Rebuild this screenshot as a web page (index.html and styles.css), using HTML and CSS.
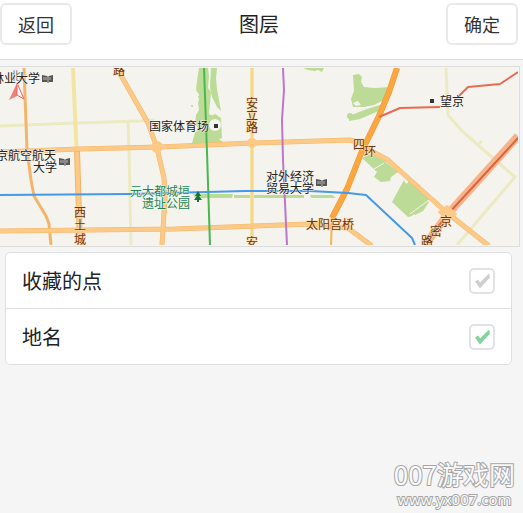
FILE: index.html
```html
<!DOCTYPE html>
<html lang="zh-CN">
<head>
    <meta charset="UTF-8">
    <meta name="viewport" content="width=device-width, initial-scale=1.0">
    <title>图层</title>
    <link rel="stylesheet" href="styles.css">
</head>
<body>
    <header class="topbar">
        <button class="btn" type="button">返回</button>
        <h1>图层</h1>
        <button class="btn" type="button">确定</button>
    </header>

    <div class="map">
        <svg viewBox="0 68 518 177" role="img" aria-label="地图">
            <defs>
                <g id="book">
                    <path d="M0 1l5 1 1 1 1-1 4-1v7l-4 0-1 1-1-1-5 0z" fill="#555"/>
                    <path d="M2 3v3M4 3v3M8 3v3M6 3v5" stroke="#bbb" fill="none"/>
                </g>
            </defs>
            <rect x="0" y="68" width="518" height="177" fill="#f5f3ee"/>

            <!-- parks -->
            <g fill="#bcdb96">
                <path d="M199 68h9l1 8-1 12 3 4-2 22 8 4-2 6-4 5 1 7 5 2 6 4v3l-29 1-2-3 3-10 4-4-4-6 1-8 3-5-1-7 2-7-4-6 1-9z"/>
                <path d="M211 68h6l-1 10 1 11 4 22-4-4-5-10-2-10z"/>
                <path d="M209 117l6-3 6 4 1 20-8 4-6-8z"/>
                <path d="M303 68h21l-2 4-4-2-3 1-7-1z"/>
                <path d="M353 75l6-1 3 3-1 5 3 5 10 1 17-1-4 13-5 1-8 4-10 2-11 0-2-8 3-8z"/>
                <path d="M349 116l18-7 16-5-2 6-21 9-11 2z"/>
                <path d="M362 158l9-4 12 6 15 12-7 5-1 4-9 1-7-5 3-5z"/>
                <path d="M404 180l2 4 5-4 8 9 11 9-18 18-4 1-16-15z"/>
                <path d="M413 214l14-14 2 2-6 9-8 4z"/>
                <path d="M193 194h40l-1 4h-37zM234 195h70v3h-70zM310 195h22l4 3h-25z"/>
            </g>
            <g fill="#f5f3ee">
                <path d="M353 103l5-2 3 4-5 1z"/>
                <circle cx="215" cy="125" r="6"/>
            </g>
            <path d="M374 169l10-6M352 111l16-4M410 214l19-14" stroke="#f5f3ee" stroke-width="1" fill="none"/>
            <g fill="#bcdb96"><circle cx="192" cy="106" r="1"/><circle cx="201" cy="87" r="2"/><circle cx="200" cy="97" r="2"/><circle cx="350" cy="116" r="3"/></g>

            <g fill="none" stroke-linejoin="round">
                <!-- small roads -->
                <g stroke="#ebeac2" stroke-width="3">
                    <path d="M0 126l75-3 65-2 14-1M128 120l1 30 2 95"/>
                    <path d="M446 68l2 47 14 16 24 21 29 25-58 68M478 145l4-4"/>
                </g>
                <g stroke="#f4e4a4" stroke-width="4">
                    <path d="M73 68l4 92M252 68v177"/>
                </g>
                <path d="M252 68v177" stroke="#f5d78e" stroke-width="2"/>

                <!-- main roads -->
                <g stroke="#f3b56a">
                    <path d="M24 68l3 82 4 30 3 16 12 20 3 8 2 21" stroke-width="3"/>
                    <path d="M77 151l3 94" stroke-width="6"/>
                    <path d="M119 72l29 51 9 25 7 30 1 20-3 47" stroke-width="5"/>
                    <path d="M0 152l80-3 80-2 92-4 98-3 17 5" stroke-width="5"/>
                    <path d="M0 231l175-2 135-5 38 4 24 18" stroke-width="5"/>
                    <path d="M362 146l26 14 58 52 43 34" stroke-width="5"/>
                </g>
                <g stroke="#fcca86" stroke-width="4">
                    <path d="M77 152l3 93M119 72l29 51 9 25 7 30 1 20-3 47"/>
                    <path d="M0 152l80-3 80-2 92-4 98-3 17 5"/>
                    <path d="M0 231l175-2 135-5 38 4 24 18M362 146l26 14 58 52 43 34"/>
                </g>
                <path d="M332 215l-1 30" stroke="#f5b54b" stroke-width="2"/>
                <path d="M397 68l-8 24-10 24-17 35-15 38-15 29" stroke="#ef9a3c" stroke-width="6"/>
                <path d="M397 68l-8 24-10 24-17 35-15 38-15 29" stroke="#fba63f" stroke-width="5"/>
                <path d="M518 136l-71 79-22 30" stroke="#f7b48c" stroke-width="8"/>
                <path d="M518 138l-70 76-22 28" stroke="#d8663e" stroke-width="2"/>
                <path d="M379 117l21-9 40-1M458 97l10-10 32-3 18-12" stroke="#e96a52" stroke-width="2"/>
                <g stroke="#fcca86" stroke-width="2" fill="#fcc987">
                    <circle cx="157" cy="147" r="5"/>
                    <circle cx="252" cy="143" r="4"/>
                    <path d="M439 212l8-6 9 8-8 7z"/>
                </g>

                <!-- metro lines -->
                <path d="M204 68l3 84 3 93" stroke="#48b84e" stroke-width="2"/>
                <path d="M283 68l1 22-2 30 1 40 4 85" stroke="#bb77cb" stroke-width="2"/>
                <path d="M0 195l130-1 115-3 65 0 38 2 18 2 46 43 3 7" stroke="#4698e8" stroke-width="2"/>
            </g>

            <!-- compass -->
            <text class="north" x="10" y="80">北</text>
            <path d="M17 83l-8 17 8-4z" fill="#ef7f7a"/>
            <path d="M17 83v12l7 4z" fill="#fff" stroke="#ef625d"/>

            <!-- places -->
            <g class="place">
                <text x="-8" y="83">林业大学</text>
                <text x="-4" y="160">京航空航天</text>
                <text x="33" y="172">大学</text>
                <text x="149" y="131">国家体育场</text>
                <text x="266" y="181">对外经济</text>
                <text x="266" y="193">贸易大学</text>
                <text x="440" y="106">望京</text>
            </g>
            <rect x="214" y="124" width="4" height="4" fill="#333"/>
            <rect x="430" y="99" width="4" height="4" fill="#333"/>
            <use href="#book" x="42" y="74"/>
            <use href="#book" x="59" y="157"/>
            <use href="#book" x="316" y="178"/>
            <g class="place park">
                <text x="130" y="196">元大都城垣</text>
                <text x="142" y="208">遗址公园</text>
            </g>
            <path d="M198 191l3 5h-2l3 4h-3v2h-2v-2h-3l3-4h-2z" fill="#16713f"/>

            <!-- road names -->
            <g class="road">
                <text x="113" y="75">路</text>
                <text x="246" y="108">安</text>
                <text x="246" y="120">立</text>
                <text x="246" y="132">路</text>
                <text x="246" y="247">安</text>
                <text x="353" y="149">四</text>
                <text x="364" y="156">环</text>
                <text x="74" y="217">西</text>
                <text x="74" y="230">土</text>
                <text x="74" y="244">城</text>
                <text x="306" y="229">太阳宫桥</text>
                <text x="440" y="226">京</text>
                <text x="430" y="236">密</text>
                <text x="421" y="246">路</text>
            </g>
        </svg>
    </div>

    <main class="list">
        <label class="row" for="fav">
            <span>收藏的点</span>
            <input type="checkbox" id="fav">
        </label>
        <label class="row" for="place">
            <span>地名</span>
            <input type="checkbox" id="place" checked>
        </label>
    </main>

    <footer class="mark">
        <p class="mark-name">007游戏网</p>
        <p class="mark-url">www.yx007.com</p>
    </footer>
</body>
</html>
```

FILE: styles.css
```css
*{
    margin: 0;
    padding: 0;
    box-sizing: border-box;
}
body{
    min-height: 100vh;
    display: flex;
    flex-direction: column;
    background-color: #f5f5f5;
    color: #222;
    font-family: "Noto Sans CJK SC", sans-serif;
}
.topbar{
    display: flex;
    justify-content: space-between;
    align-items: center;
    padding: 3px 5px 14px 0;
    background-color: #fff;
    border-bottom: 1px solid #dedede;
}
.topbar h1{
    font-size: 20px;
    font-weight: normal;
    line-height: 30px;
}
.btn{
    padding: 0 16px;
    height: 42px;
    border: 2px solid #e9e9e9;
    border-radius: 6px;
    background-color: #fff;
    color: #333;
    font-family: inherit;
    font-size: 18px;
    cursor: pointer;
}
.map{
    margin: 6px 3px 0 0;
    padding: 1px 1px 1px 0;
    border: 1px solid #dcdcdc;
    border-left: 0;
}
.map svg{
    display: block;
    width: 100%;
}
.place{
    font-size: 12px;
    fill: #222;
    stroke: #f5f3ee;
    stroke-width: 1px;
    paint-order: stroke;
}
.park{
    fill: #1c8757;
}
.road{
    font-size: 12px;
    fill: #683612;
    stroke: #fbdcae;
    stroke-width: 1px;
    paint-order: stroke;
}
.north{
    font-size: 11px;
    fill: #777;
}
.list{
    margin: 5px 11px 0 5px;
    border: 1px solid #dfdfdf;
    border-radius: 5px;
    background-color: #fff;
}
.row{
    display: flex;
    justify-content: space-between;
    align-items: center;
    height: 55px;
    padding: 0 16px;
    font-size: 20px;
}
.row + .row{
    height: 56px;
    border-top: 1px solid #dfdfdf;
}
.row input{
    appearance: none;
    width: 26px;
    height: 26px;
    border: 2px solid #e4e0e4;
    border-radius: 5px;
    background-color: #fff;
}
.row input::before{
    content: "";
    display: block;
    width: 22px;
    height: 22px;
    background-color: #cfcfcf;
    clip-path: polygon(4px 12px, 7px 10px, 9px 13px, 18px 4px, 19px 8px, 9px 19px);
}
.row input:checked::before{
    background-color: #82d39b;
}
.mark{
    align-self: flex-end;
    margin-top: auto;
    padding: 0 8px 4px;
    text-align: center;
    color: #fafafa;
    -webkit-text-stroke: 2px #a5a5a5;
    paint-order: stroke;
}
.mark-name{
    font-size: 26px;
    line-height: 30px;
}
.mark-url{
    font-family: "Open Sans", sans-serif;
    font-size: 15px;
    line-height: 20px;
}
```
